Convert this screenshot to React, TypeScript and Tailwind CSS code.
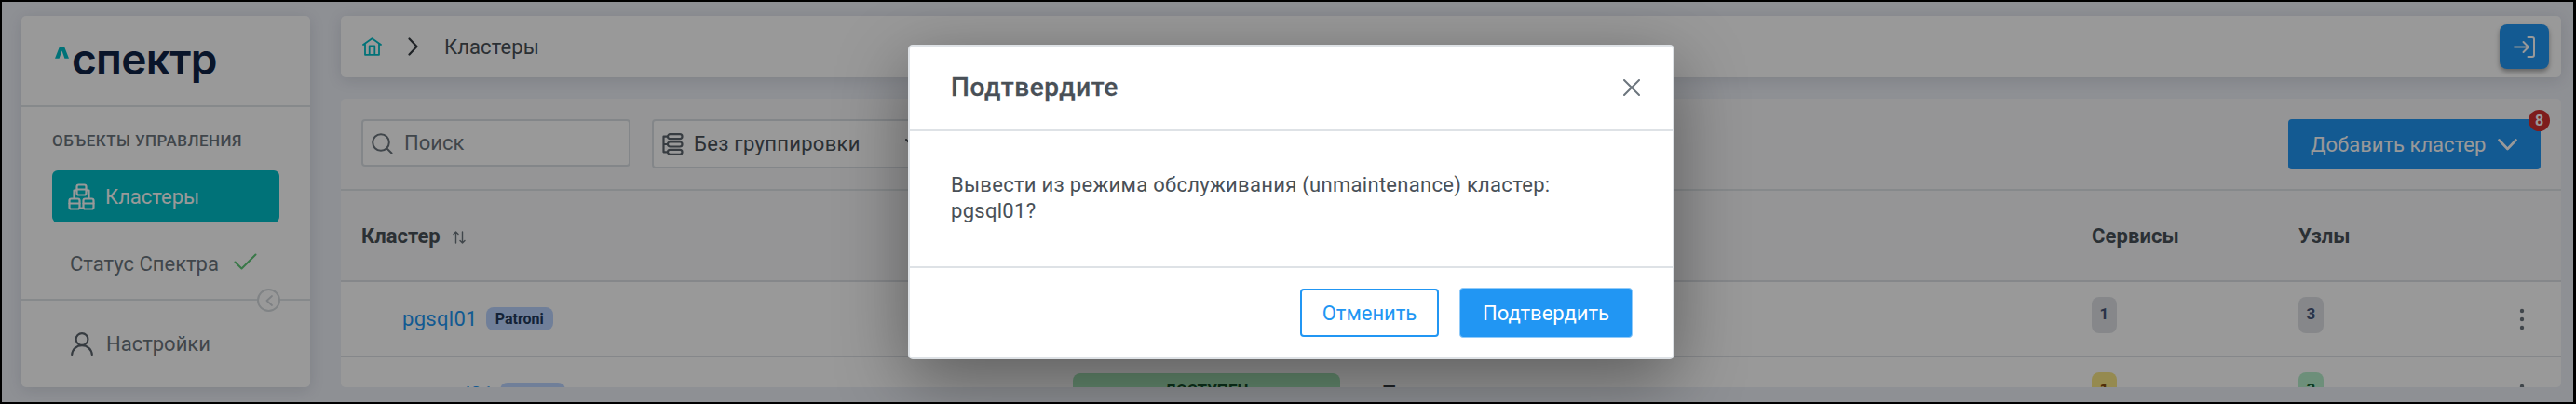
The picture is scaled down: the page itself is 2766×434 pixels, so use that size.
import React from "react";

type IconProps = { className?: string; children?: React.ReactNode; box: string; w?: number };
const Icon = ({ className = "", children, box, w = 2 }: IconProps) => (
  <svg viewBox={box} className={"shrink-0 block " + className} fill="none" stroke="currentColor" strokeWidth={w} strokeLinecap="round" strokeLinejoin="round">
    {children}
  </svg>
);

function Sidebar() {
  return (
    <aside className="flex h-[399px] w-[310px] shrink-0 flex-col rounded-[5px] bg-white shadow-[0_3px_16px_rgba(50,60,80,0.14)]">
      <div className="flex h-[98px] shrink-0 items-start border-b-2 border-[#e0e4e8] pl-[36px] pt-[32px]">
        <Icon box="0 0 15 13" w={4} className="mt-[1px] h-[13px] w-[15px] text-[#00bfc8]">
          <path fill="currentColor" stroke="none" d="M0 12.7 5 0h5l5 12.7h-4.600L7.500 4.500 4.600 12.700z" />
        </Icon>
        <span className="ml-[3px] -mt-[13px] font-['Inter'] text-[46px] font-semibold leading-[54px] tracking-[-0.700px] text-[#0f2346]">спектр</span>
      </div>
      <div className="flex h-[208px] shrink-0 flex-col border-b-2 border-[#e0e4e8]">
        <div className="mt-[25px] pl-[33px] text-[17px] font-medium leading-[22px] tracking-[0.450px] text-[#6c757d]">ОБЪЕКТЫ УПРАВЛЕНИЯ</div>
        <div className="mx-[33px] mt-[21px] flex h-[56px] items-center rounded-[6px] bg-[#00bfc8] pl-[17px] text-white">
          <Icon box="0 0 29 29" w={2.2} className="h-[29px] w-[29px]">
            <rect x="9.500" y="1.500" width="10" height="11" rx="2" /><path d="M9.500 6.500h10M9 7.500H6.500v8M20 7.500h2.500v8" />
            <rect x="1.500" y="16.500" width="11" height="11" rx="2" /><path d="M1.500 21.500h11" />
            <rect x="16.500" y="16.500" width="11" height="11" rx="2" /><path d="M16.500 21.500h11M12.500 26.500h4" />
          </Icon>
          <span className="ml-[11px] text-[22px]">Кластеры</span>
        </div>
        <div className="mt-[26px] flex h-[36px] items-center pl-[52px] text-[#6c757d]">
          <span className="text-[22px]">Статус Спектра</span>
          <Icon box="0 0 25 18" w={2} className="ml-[16px] -mt-[4px] h-[18px] w-[25px] text-[#60c878]"><path d="M1.500 9.500 8.500 16.500 23.500 1.500" /></Icon>
        </div>
      </div>
      <div className="relative flex flex-1 items-center pl-[53px] text-[#5c656d]">
        <div className="absolute right-[32px] -top-[13px] flex size-[25px] items-center justify-center rounded-full border-2 border-[#d5dade] bg-white text-[#d0d5da]">
          <Icon box="0 0 8 12" w={1.800} className="h-[12px] w-[8px]"><path d="M7 1 1.500 6 7 11" /></Icon>
        </div>
        <Icon box="0 0 24 25" w={2.2} className="h-[25px] w-[24px]"><circle cx="12" cy="7.500" r="6.400" /><path d="M1.200 24c.6-6 5-9.800 10.800-9.800s10.200 3.800 10.800 9.800" /></Icon>
        <span className="ml-[14px] text-[22px] text-[#6c757d]">Настройки</span>
      </div>
    </aside>
  );
}

function Breadcrumbs() {
  return (
    <header className="flex h-[66px] shrink-0 items-center rounded-[5px] bg-white pl-[23px] pr-[13px] shadow-[0_3px_16px_rgba(50,60,80,0.14)]">
      <Icon box="0 0 21 20" w={1.800} className="h-[20px] w-[21px] text-[#00bfc8]">
        <path d="M1 8 10.500 1.200 20 8M3 7v11.800h15V7M7.700 18.500v-9h5.600v9" />
      </Icon>
      <Icon box="0 0 11 20" w={2.2} className="ml-[28px] h-[20px] w-[11px] text-[#343a40]"><path d="M1.500 1.500 9.500 10l-8 8.500" /></Icon>
      <span className="ml-[28px] flex-1 text-[22px] tracking-[0.1px] text-[#495057]">Кластеры</span>
      <button className="flex h-[48px] w-[53px] items-center justify-center rounded-[8px] bg-[#2196f3] text-white shadow-[0_3px_5px_rgba(0,0,0,0.35)]">
        <Icon box="0 0 23 23" w={2} className="size-[23px]"><path d="M1 11.500h15M10.500 6l5.500 5.500-5.500 5.500M15.500 1h4.500q2 0 2 2v17q0 2-2 2h-4.500" /></Icon>
      </button>
    </header>
  );
}

const Dots = () => (
  <svg viewBox="0 0 6 26" className="h-[26px] w-[6px]" fill="#6c757d"><circle cx="3" cy="4" r="2.200" /><circle cx="3" cy="13" r="2.200" /><circle cx="3" cy="22" r="2.200" /></svg>
);

function Row({ children }: { children: React.ReactNode }) {
  return <div className="grid h-[81px] shrink-0 grid-cols-[786px_286px_808px_222px_1fr] items-center border-b-2 border-[#dee2e6] bg-white">{children}</div>;
}

function Count({ tone, children }: { tone: string; children: React.ReactNode }) {
  return <div className={"-mt-[8px] flex h-[39px] w-[27px] items-center justify-center rounded-[8px] pb-[1px] text-[17px] font-bold " + tone}>{children}</div>;
}

function Clusters() {
  return (
    <section className="flex h-[310px] flex-col overflow-hidden rounded-[5px] bg-[#f8f9fa]">
      <div className="flex h-[99px] shrink-0 items-start border-b-2 border-[#e0e4e8] pl-[22px] pr-[22px] pt-[22px]">
        <div className="flex h-[51px] w-[289px] items-center rounded-[4px] border-2 border-[#dbe0e5] bg-white pl-[9px] text-[#6c757d]">
          <Icon box="0 0 23 22" w={2} className="h-[22px] w-[23px]"><circle cx="10" cy="10" r="8.800" /><path d="m16.500 16.500 5 5" /></Icon>
          <span className="ml-[12px] text-[22px]">Поиск</span>
        </div>
        <div className="ml-[23px] flex h-[53px] w-[298px] items-center rounded-[4px] border-2 border-[#dbe0e5] bg-white pl-[9px] pr-[10px] text-[#495057]">
          <Icon box="0 0 23 24" w={2.200} className="h-[24px] w-[23px] text-[#5c656d]">
            <rect x="6" y="1.200" width="15.500" height="5" rx="2.500" /><rect x="6" y="9.500" width="15.500" height="5" rx="2.500" /><rect x="6" y="17.800" width="15.500" height="5" rx="2.500" />
            <path d="M6 3.700H1.500v16.600H6M1.500 12H6" />
          </Icon>
          <span className="ml-[11px] flex-1 text-[22px] tracking-[0.300px]">Без группировки</span>
          <Icon box="0 0 14 9" className="-mt-[3px] h-[9px] w-[14px]"><path d="m1 1 6 6 6-6" /></Icon>
        </div>
        <div className="relative ml-auto flex h-[54px] w-[271px] items-center rounded-[4px] bg-[#2196f3] pl-[24px] text-white">
          <span className="text-[22px]">Добавить кластер</span>
          <Icon box="0 0 21 13" w={2.600} className="ml-[13px] h-[13px] w-[21px]"><path d="m1.500 1.500 9 9.500 9-9.500" /></Icon>
          <span className="absolute -right-[10px] -top-[10px] flex size-[23px] items-center justify-center rounded-full bg-[#d32f2f] text-[16px] font-bold">8</span>
        </div>
      </div>
      <div className="grid h-[98px] shrink-0 grid-cols-[1880px_222px_1fr] items-center border-b-2 border-[#dee2e6] text-[22px] font-bold text-[#495057]">
        <div className="flex items-center pl-[22px]">
          Кластер
          <Icon box="0 0 14 14" w={1.400} className="ml-[13px] mt-[3px] size-[14px] text-[#6c757d]"><path d="M3.500 13V1M1 3.500 3.500 1 6 3.500M10.500 1v12M8 10.500l2.500 2.500 2.500-2.500" /></Icon>
        </div>
        <div className="tracking-[0.1px]">Сервисы</div>
        <div>Узлы</div>
      </div>
      <Row>
        <div className="flex items-center pl-[66px]">
          <span className="text-[22px] tracking-[0.300px] text-[#2196f3]">pgsql01</span>
          <span className="ml-[9px] flex h-[25px] w-[72px] items-center justify-center rounded-[8px] bg-[#bbd4ff] text-[16px] font-bold text-[#213a5c]">Patroni</span>
        </div>
        <div /><div />
        <Count tone="bg-[#dfe2e6] text-[#475679]">1</Count>
        <div className="flex items-center justify-between pr-[39px]">
          <Count tone="bg-[#dfe2e6] text-[#475679]">3</Count>
          <Dots />
        </div>
      </Row>
      <Row>
        <div className="flex items-center pl-[66px]">
          <span className="w-[97px] whitespace-nowrap text-[22px] text-[#2196f3]">patgsql01</span>
          <span className="ml-[8px] flex h-[25px] w-[70px] items-center justify-center rounded-[8px] bg-[#bbd4ff] text-[16px] font-bold text-[#213a5c]">Patroni</span>
        </div>
        <div className="-mt-[8px] flex h-[37px] w-[287px] items-center justify-center rounded-[8px] bg-[#a5e4b8] text-[17px] font-bold text-[#14532d]">ДОСТУПЕН</div>
        <div className="-mt-[2px] pl-[47px] text-[22px] font-medium text-[#343a40]">Т</div>
        <Count tone="bg-[#f9e686] text-[#854d0e]">1</Count>
        <div className="flex items-center justify-between pr-[39px]">
          <Count tone="bg-[#b6efcb] text-[#166534]">3</Count>
          <Dots />
        </div>
      </Row>
    </section>
  );
}

function Dialog() {
  return (
    <div className="absolute inset-0 overflow-hidden bg-black/40">
      <div className="mx-auto mt-[46px] flex h-[338px] w-[823px] translate-x-[4px] flex-col rounded-[5px] border-2 border-[#dee2e6] bg-white shadow-[0_22px_76px_rgba(0,0,0,0.4)]">
        <div className="flex h-[91px] shrink-0 items-center justify-between border-b-2 border-[#dee2e6] pb-[1px] pl-[44px] pr-[35px]">
          <h2 className="text-[28px] font-medium tracking-[0.600px] text-[#495057] [-webkit-text-stroke:0.3px_#495057]">Подтвердите</h2>
          <Icon box="0 0 18 18" w={2} className="size-[18px] text-[#6c757d]"><path d="m1 1 16 16M17 1 1 17" /></Icon>
        </div>
        <div className="h-[147px] shrink-0 border-b-2 border-[#dee2e6] px-[44px] pt-[44px] text-[22px] leading-[28px] tracking-[0.290px] text-[#495057]">
          Вывести из режима обслуживания (unmaintenance) кластер:<br />pgsql01?
        </div>
        <div className="flex flex-1 items-center justify-end pr-[43px] text-[22px]">
          <button className="h-[52px] w-[149px] rounded-[4px] border-2 border-[#2196f3] text-[#2196f3]">Отменить</button>
          <button className="ml-[22px] h-[54px] w-[186px] rounded-[4px] border border-[#90caf9] bg-[#2196f3] text-white">Подтвердить</button>
        </div>
      </div>
    </div>
  );
}

export default function App() {
  return (
    <div className="h-[434px] w-[2766px] bg-black pb-[2px] pl-[2px] pr-[3px] pt-[2px] font-['Roboto',sans-serif]">
      <div className="relative flex h-[430px] overflow-hidden bg-[#edf0f7] pl-[21px] pr-[13px] pt-[15px]">
        <Sidebar />
        <main className="ml-[33px] flex flex-1 flex-col gap-[23px]">
          <Breadcrumbs />
          <Clusters />
        </main>
        <Dialog />
      </div>
    </div>
  );
}
